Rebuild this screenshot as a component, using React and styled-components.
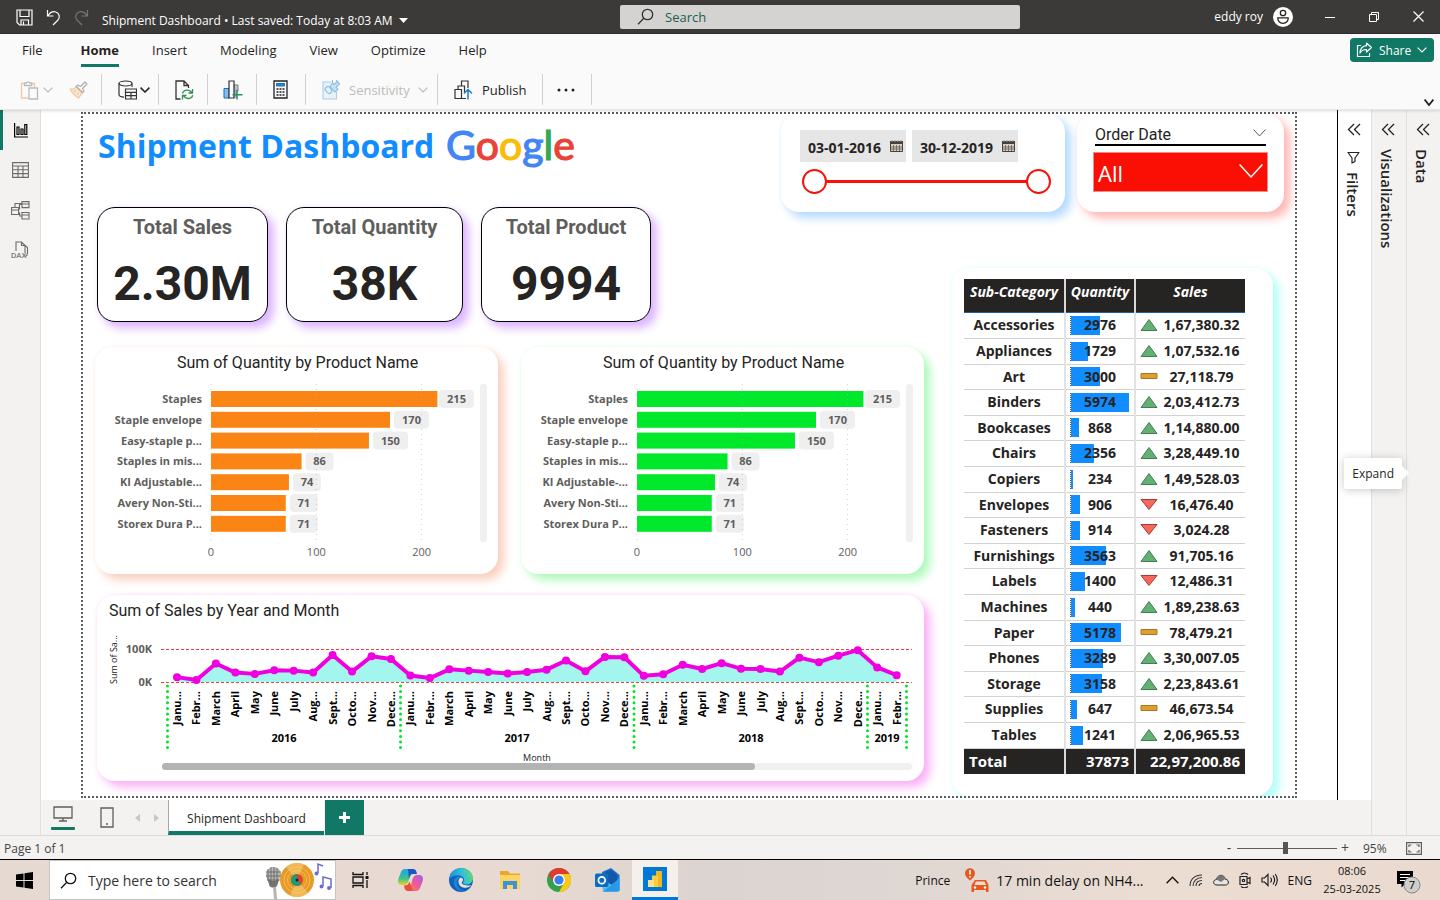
import React, { useState } from 'react';
import styled, { createGlobalStyle, css } from 'styled-components';

const ui = '"Open Sans", "Noto Sans", sans-serif';
const din = 'Roboto, "Liberation Sans", sans-serif';
const green = '#117865';
const grey = '#605e5c';
const ink = '#252423';

const GlobalStyle = createGlobalStyle`
  * { box-sizing: border-box; }
  body { margin: 0; font-family: ${ui}; font-size: 12px; color: ${ink}; background: #f3f2f1; }
  button, input, select { font: inherit; color: inherit; }
  button { border: 0; padding: 0; background: none; cursor: pointer; }
  h1, h2, h3, p { margin: 0; font-weight: inherit; }
  svg { display: block; flex: none; }
`;

/* ---------- shell ---------- */
const Shell = styled.div`
  min-height: 100vh;
  display: flex;
  flex-direction: column;
  overflow: hidden;
`;

const TitleBar = styled.header`
  height: 34px;
  display: grid;
  grid-template-columns: 31fr 20fr 21fr;
  align-items: center;
  background: #3b3a39;
  border-bottom: 1px solid #2f2d33;
  color: #fff;
`;
const TitleLeft = styled.div`
  display: flex;
  align-items: center;
  padding: 2px 0 0 16px;
  gap: 13px;
  white-space: nowrap;
`;
const TitleText = styled.h1`
  display: flex;
  align-items: center;
  gap: 6px;
  font-size: 12px;
  line-height: 16px;
  padding-top: 6px;
`;
const TitleRight = styled.div`
  display: flex;
  align-items: center;
  justify-content: flex-end;
`;
const UserName = styled.span`
  margin-right: 10px;
`;
const WindowButton = styled.button`
  width: 44px;
  height: 32px;
  display: flex;
  align-items: center;
  justify-content: center;
`;
const SearchBox = styled.label`
  height: 24px;
  display: flex;
  align-items: center;
  gap: 11px;
  padding-left: 17px;
  border-radius: 2px;
  background: #d4d3d1;
`;
const SearchInput = styled.input`
  flex: 1;
  min-width: 0;
  border: 0;
  padding: 0;
  outline: 0;
  background: none;
  font-size: 13px;
  &::placeholder { color: #1b5e50; opacity: 1; }
`;

const Ribbon = styled.div`
  background: #fafafa;
  border-bottom: 1px solid #e6e6e6;
  box-shadow: 0 1px 3px rgba(0, 0, 0, 0.14);
  z-index: 2;
`;
const RibbonTabs = styled.nav`
  height: 36px;
  display: flex;
  align-items: center;
  padding: 0 6px 0 22px;
  gap: 33px;
`;
const RibbonTab = styled.button`
  height: 30px;
  padding: 0 0 1px;
  border-bottom: 3px solid ${(p) => (p.$active ? green : 'transparent')};
  font-size: 13px;
  line-height: 20px;
  font-weight: ${(p) => (p.$active ? 700 : 400)};
  margin-right: ${(p) => (p.$first ? '5px' : '0')};
`;
const ShareButton = styled.button`
  display: flex;
  align-items: center;
  gap: 6px;
  height: 24px;
  width: 84px;
  margin: 0 0 4px auto;
  padding-left: 6px;
  border-radius: 4px;
  background: ${green};
  color: #fff;
  font-size: 12px;
`;
const Toolbar = styled.div`
  height: 39px;
  display: flex;
  align-items: center;
`;
const ToolGroup = styled.div`
  width: ${(p) => p.$w}px;
  height: 31px;
  padding-left: ${(p) => p.$pad || 0}px;
  display: flex;
  align-items: center;
  gap: ${(p) => p.$gap || 0}px;
  border-right: 1px solid #d2d0ce;
`;
const ToolButton = styled.button`
  display: flex;
  align-items: center;
  gap: ${(p) => p.$gap || 4}px;
  font-size: 13px;
  color: ${(p) => (p.disabled ? '#bdbbb9' : ink)};
`;
const CollapseButton = styled.button`
  margin: auto 6px 3px auto;
`;

const Body = styled.div`
  flex: 1;
  display: flex;
`;
const Rail = styled.nav`
  width: 41px;
  background: #f3f2f1;
  border-right: 1px solid #e1dfdd;
  display: flex;
  flex-direction: column;
`;
const RailButton = styled.button`
  height: 40px;
  padding-right: 2px;
  display: flex;
  align-items: center;
  justify-content: center;
  border-left: 3px solid ${(p) => (p.$active ? green : 'transparent')};
`;
const Center = styled.main`
  flex: 1;
  min-width: 0;
  display: flex;
  flex-direction: column;
`;
const Workspace = styled.div`
  flex: 1;
  display: flex;
  background: #fff;
`;
const Report = styled.section`
  flex: 1;
  min-width: 0;
  margin: 2px 40px;
  border: 2px dotted #5c5c5c;
  padding: 0 11px 0 12px;
  display: grid;
  grid-template-columns: minmax(0, 1fr) 171px 332px;
  grid-template-rows: 154px 79px 1fr;
  overflow: hidden;
`;

/* ---------- side panes ---------- */
const Pane = styled.aside`
  width: ${(p) => p.$w}px;
  display: flex;
  flex-direction: column;
  align-items: center;
  padding: 11px 2px 0 0;
  background: ${(p) => (p.$white ? '#fff' : '#f3f2f1')};
  border-left: 1px solid ${(p) => (p.$white ? '#000' : '#e1dfdd')};
`;
const PaneTitle = styled.h2`
  writing-mode: vertical-rl;
  font-size: 15px;
  line-height: 20px;
  font-weight: 600;
  margin: ${(p) => (p.$tight ? 8 : 12)}px 2px 0 0;
`;
const PaneButton = styled.button`
  height: 16px;
  margin-bottom: ${(p) => (p.$below || 0)}px;
`;
const PaneTooltip = styled.div`
  position: absolute;
  right: 38px;
  top: 458px;
  z-index: 5;
  padding: 0 8px;
  line-height: 31px;
  font-size: 12px;
  background: #fff;
  border-radius: 2px;
  box-shadow: 0 1px 8px rgba(0, 0, 0, 0.22);
  &::after {
    content: '';
    position: absolute;
    right: -5px;
    top: 10px;
    width: 10px;
    height: 10px;
    background: #fff;
    transform: rotate(45deg);
  }
`;

/* ---------- report visuals ---------- */
const Card = styled.article`
  background: #fff;
  border-radius: ${(p) => p.$r || 18}px;
  box-shadow: 6px 6px 10px ${(p) => p.$glow}, 0 0 4px ${(p) => p.$glow}55;
`;
const Intro = styled.div`
  grid-column: 1;
  grid-row: 1 / 3;
  padding-left: 2px;
`;
const Heading = styled.div`
  height: 93px;
  display: flex;
  align-items: flex-start;
  gap: 12px;
  padding-left: 1px;
  white-space: nowrap;
`;
const ReportTitle = styled.h2`
  font-size: 32px;
  line-height: 64px;
  font-weight: 700;
  color: #118dff;
`;
const KpiRow = styled.div`
  display: flex;
  gap: 18px;
`;
const Kpi = styled(Card)`
  width: ${(p) => p.$w}px;
  height: 115px;
  border: 1px solid #000;
  font-family: ${din};
  text-align: center;
  font-weight: 700;
`;
const KpiLabel = styled.h3`
  font-size: 20px;
  line-height: 38px;
  color: ${grey};
`;
const KpiValue = styled.p`
  font-size: 48px;
  line-height: 76px;
`;
const Filters = styled.div`
  grid-column: 2 / 4;
  grid-row: 1;
  height: 98px;
  display: flex;
  gap: 12px;
`;
const DateCard = styled(Card)`
  flex: 1;
  padding: 16px 14px 0 19px;
`;
const DateFields = styled.div`
  display: flex;
  gap: 6px;
`;
const DateField = styled.label`
  width: 106px;
  height: 32px;
  display: flex;
  align-items: center;
  padding: 2px 0 0 8px;
  background: #e6e6e6;
  & > svg { margin-bottom: 3px; }
`;
const DateInput = styled.input`
  width: 82px;
  padding: 0;
  border: 0;
  background: none;
  font-size: 14px;
  font-weight: 700;
`;
const Range = styled.div`
  display: grid;
  align-items: center;
  margin: 7px 0 0 2px;
  height: 25px;
  &::before {
    content: '';
    grid-area: 1 / 1;
    height: 3px;
    margin: 0 12px;
    background: #fb1108;
  }
`;
const thumb = css`
  appearance: none;
  width: 25px;
  height: 25px;
  border: 2px solid #f3130c;
  border-radius: 50%;
  background: #fff;
  pointer-events: auto;
`;
const RangeInput = styled.input`
  grid-area: 1 / 1;
  appearance: none;
  width: 100%;
  height: 25px;
  margin: 0;
  background: none;
  pointer-events: none;
  &::-webkit-slider-thumb { ${thumb} }
`;
const OrderCard = styled(Card)`
  width: 207px;
  padding: 12px 16px 0;
`;
const OrderLabel = styled.label`
  display: flex;
  align-items: center;
  justify-content: space-between;
  margin: 0 2px 6px;
  border-bottom: 2px solid #000;
  font-family: ${din};
  font-size: 16px;
  line-height: 18px;
  & > svg { margin-bottom: 4px; }
`;
const SelectWrap = styled.div`
  display: grid;
  align-items: center;
  & > * { grid-area: 1 / 1; }
  & > svg { justify-self: end; margin: 0 5px 3px 0; pointer-events: none; }
`;
const OrderSelect = styled.select`
  appearance: none;
  width: 100%;
  height: 40px;
  padding: 2px 4px 0;
  border: 1px solid #f98a85;
  border-radius: 0;
  background: #fb0f05;
  color: #fff;
  font-size: 22px;
`;
const Charts = styled.div`
  grid-column: 1 / 3;
  grid-row: 3;
  margin-right: 28px;
  display: flex;
  flex-direction: column;
  gap: 21px;
`;
const ChartPair = styled.div`
  display: grid;
  grid-template-columns: 1fr 1fr;
  gap: 23px;
`;
const BarCard = styled(Card)`
  height: 227px;
`;
const ChartTitle = styled.h3`
  font-family: ${din};
  font-size: 16px;
  line-height: 32px;
  text-align: ${(p) => (p.$left ? 'left' : 'center')};
  padding-left: ${(p) => (p.$left ? 12 : 2)}px;
`;
const ChartSvg = styled.svg`
  width: 100%;
  height: auto;
  font-family: ${ui};
`;
const LineCard = styled(Card)`
  height: 186px;
  margin-left: 2px;
`;
const TableCard = styled(Card)`
  grid-column: 3;
  grid-row: 2 / 4;
  margin-right: 11px;
  padding: 11px 12px 0;
`;
const DataTable = styled.table`
  width: 281px;
  border-collapse: collapse;
  table-layout: fixed;
  font-size: 14px;
  line-height: 18px;
  font-weight: 700;
  text-align: center;
`;
const HeadCell = styled.th`
  height: 33px;
  width: ${(p) => p.$w}px;
  padding: 4px 0 0;
  vertical-align: top;
  background: ${ink};
  color: #fff;
  font-size: 14px;
  font-style: italic;
  border-bottom: 1px solid #1c5fa8;
  & + & { border-left: 2px solid #d8d8d8; }
`;
const BodyRow = styled.tr`
  height: 26px;
  &:nth-child(5n), &:nth-child(5n + 3) { height: 25px; }
`;
const Cell = styled.td`
  padding: 0;
  border-bottom: 1px solid #d2d2d2;
  & + & { border-left: 2px solid #e2e2e2; }
`;
const BarCell = styled.div`
  display: grid;
  align-items: center;
  margin-left: 4px;
  border-left: 1px dotted #555;
  & > * { grid-area: 1 / 1; }
`;
const DataBar = styled.i`
  height: 19px;
  background: #118dff;
`;
const BarText = styled.span`
  padding-right: 5px;
`;
const SalesCell = styled.div`
  display: flex;
  align-items: center;
  padding-left: 4px;
`;
const SalesText = styled.span`
  flex: 1;
`;
const FootCell = styled.td`
  height: 26px;
  padding: 0 5px;
  background: ${ink};
  color: #fff;
  font-size: 15px;
  text-align: ${(p) => (p.$left ? 'left' : 'right')};
  & + & { border-left: 2px solid #d8d8d8; padding-left: 0; }
`;

/* ---------- bottom bars ---------- */
const PageTabs = styled.div`
  height: 35px;
  display: flex;
  background: #f3f2f1;
`;
const ViewButton = styled.button`
  width: ${(p) => p.$w}px;
  display: flex;
  flex-direction: column;
  align-items: center;
  justify-content: center;
  gap: 5px;
`;
const ViewMark = styled.i`
  width: 24px;
  height: 3px;
  border-radius: 1px;
  background: ${green};
`;
const PageTab = styled.button`
  width: 156px;
  padding-top: 6px;
  background: #fff;
  border-left: 1px solid #a8a8a8;
  border-bottom: 4px solid ${green};
  font-size: 12px;
`;
const AddPage = styled.button`
  width: 39px;
  margin-left: 1px;
  display: flex;
  align-items: center;
  justify-content: center;
  background: ${green};
`;
const StatusBar = styled.footer`
  height: 25px;
  display: flex;
  align-items: center;
  padding: 1px 18px 0 4px;
  border-top: 1px solid #dddbd9;
  border-bottom: 1px solid #000;
  background: #f3f2f1;
  color: #444;
  font-size: 12px;
`;
const ZoomGroup = styled.div`
  margin-left: auto;
  display: flex;
  align-items: center;
  gap: 4px;
`;
const ZoomButton = styled.button`
  line-height: 16px;
  width: 8px;
  font-size: 14px;
`;
const ZoomSlider = styled.input`
  appearance: none;
  width: 100px;
  height: 12px;
  margin: 0;
  background: linear-gradient(${grey}, ${grey}) center / 100% 1px no-repeat;
  &::-webkit-slider-thumb {
    appearance: none;
    width: 5px;
    height: 12px;
    background: #555;
  }
`;
const ZoomValue = styled.span`
  width: 26px;
  margin: 0 8px 0 10px;
`;
const FitButton = styled.button`
  margin-left: 5px;
`;

const Taskbar = styled.footer`
  height: 40px;
  display: flex;
  align-items: center;
  background: linear-gradient(90deg, #e6d9d2 0%, #e8dad2 36%, #dcd4d0 49%, #ddd6d2 60%, #ecddd3 80%, #ead9cf 100%);
`;
const StartButton = styled.button`
  width: 49px;
  height: 40px;
  display: flex;
  align-items: center;
  justify-content: center;
`;
const TaskSearch = styled.label`
  width: 287px;
  height: 40px;
  display: flex;
  align-items: center;
  padding: 0 3px 0 10px;
  gap: 11px;
  background: #fff;
  border: 1px solid #c8c4c2;
`;
const TaskInput = styled.input`
  flex: 1;
  min-width: 0;
  border: 0;
  padding: 0;
  outline: 0;
  background: none;
  font-size: 14px;
  &::placeholder { color: #333; opacity: 1; }
`;
const TaskApp = styled.button`
  width: ${(p) => p.$w || 49}px;
  height: 40px;
  display: flex;
  align-items: center;
  justify-content: center;
  ${(p) => p.$active && css`
    background: #f6f0ec;
    border-bottom: 3px solid #0078d7;
  `}
`;
const Tray = styled.div`
  margin-left: auto;
  display: flex;
  align-items: center;
  padding-right: 18px;
  color: #111;
  white-space: nowrap;
`;
const Traffic = styled.button`
  display: flex;
  align-items: center;
  gap: 6px;
  margin: 0 22px 0 14px;
  font-size: 14px;
`;
const TrayIcons = styled.div`
  display: flex;
  align-items: center;
  gap: 10px;
`;
const Clock = styled.time`
  width: 68px;
  margin: 0 10px 0 6px;
  text-align: center;
  font-size: 11px;
  line-height: 18px;
`;

/* ---------- icons ---------- */
const Svg = ({ w, h, vw, vh, children, ...rest }) => (
  <svg width={w} height={h} viewBox={`0 0 ${vw || w} ${vh || h}`} fill="none" aria-hidden="true" {...rest}>{children}</svg>
);
const Chevron = ({ w = 10, h = 6, color = '#444', sw = 1.2 }) => (
  <Svg w={w} h={h} stroke={color} strokeWidth={sw}><path d={`M.6 .6 L${w / 2} ${h - 1} L${w - 0.6} .6`} /></Svg>
);
const SaveIcon = () => (
  <Svg w={17} h={17} stroke="#fff" strokeWidth="1.2"><path d="M1 1h15v15H3.5L1 13.5zM4 1v6.5h9V1M5 16v-5h7.500v5M7.500 12.500V16" /></Svg>
);
const UndoIcon = ({ flip, color }) => (
  <Svg w={15} h={17} stroke={color} strokeWidth="1.200">
    <g transform={flip ? 'translate(15 0) scale(-1 1)' : undefined}><path d="M1.500 1v6h6M1.800 6.800C4 3.500 7 2 9.800 3c3.800 1.300 4.600 5.500 2 8.300L7 16" /></g>
  </Svg>
);
const SearchIcon = ({ color = '#333', s = 17 }) => (
  <Svg w={s} h={s} vw={17} vh={17} stroke={color} strokeWidth="1.300"><circle cx="10.500" cy="6.500" r="5.200" /><path d="M6.800 10.300 1 16.200" /></Svg>
);
const Avatar = () => (
  <Svg w={20} h={20}><circle cx="10" cy="10" r="10" fill="#fff" /><circle cx="10" cy="6" r="2.700" stroke="#222" strokeWidth="1.300" /><path d="M4.800 10.800h10.400c.3 3.300-2 5.500-5.200 5.500s-5.500-2.200-5.200-5.500z" stroke="#222" strokeWidth="1.300" /></Svg>
);
const ShareIcon = () => (
  <Svg w={17} h={16} stroke="#fff" strokeWidth="1.200"><path d="M5 3.500H1.500v11h12V11M10.500 1l5 4.500-5 4.500V7.500C7.500 7.300 5.500 8.500 4 11c.3-4 2.500-7 6.500-7.300z" strokeLinejoin="round" /></Svg>
);
const PasteIcon = () => (
  <Svg w={19} h={20} strokeWidth="1.300"><path d="M8 18H1.500V3.500h3M11.500 3.500h3V7" stroke="#efc9a4" /><path d="M4.500 5.500V3h2a1.700 1.700 0 0 1 3.200 0h2v2.500z" stroke="#bdbbb9" /><path d="M9 8h8.500v11H9z" stroke="#bdbbb9" fill="#fafafa" /></Svg>
);
const BrushIcon = () => (
  <Svg w={19} h={18} strokeWidth="1.200" strokeLinejoin="round"><path d="M1 8c3 .5 5-.5 6.500-2.500l6 6C12 14 11 15.500 9.500 17 6 15 3 12 1 8z" fill="#fbe3cc" stroke="#efc9a4" /><path d="M7 5.500l2-1.500 2.500 1.500L16 1l2 2-4.500 4.500L15 10l-1.500 1.700z" stroke="#b0aeac" /><path d="M5 11l2-2M8 14l2-2.500" stroke="#efc9a4" /></Svg>
);
const DataIcon = () => (
  <Svg w={19} h={20} stroke="#333" strokeWidth="1.200"><ellipse cx="7.500" cy="3.500" rx="6.500" ry="2.500" /><path d="M1 3.500v11c0 1.500 2 2.500 5 2.700M14 3.500V7M7.500 9h11v10h-11zM7.500 12.300h11M7.500 15.600h11M13 12.300V19" /></Svg>
);
const RefreshDocIcon = () => (
  <Svg w={19} h={20} strokeWidth="1.300"><path d="M5.500 19H1V1h8l4.500 4.500V8M9 1v4.500h4.500" stroke="#333" /><path d="M7.500 13.500c.6-2.300 2.300-3.400 4.700-3.400 2 0 3.700 1 4.600 2.700M17.500 9v4h-4M17.800 15.200c-.8 2.300-2.400 3.300-4.700 3.300-2 0-3.700-1-4.600-2.700M7.500 19.500v-4h4" stroke="#2f9150" /></Svg>
);
const NewVisualIcon = () => (
  <Svg w={20} h={20}><path d="M1 8.500h5V18H1z" fill="#83bdf0" stroke="#1a6fb5" /><path d="M11 5h4v6h-4z" fill="#c8c6c4" stroke="#777" /><path d="M11 9h3v9h-3z" fill="#83bdf0" /><path d="M6 18V1h5v17z" fill="#fafafa" stroke="#333" strokeWidth="1.200" /><path d="M14 10v9.500M9.500 14.800h10" stroke="#2f9150" strokeWidth="1.500" /></Svg>
);
const CalcIcon = () => (
  <Svg w={15} h={19}><path d="M1 1h13v17H1z" stroke="#222" strokeWidth="1.300" /><path d="M3.500 3.500h8v2.500h-8z" fill="#2a8ad4" stroke="#1a6fb5" /><path d="M3.500 9h2M6.500 9h2M9.500 9h2M3.500 12h2M6.500 12h2M9.500 12h2M3.500 15h2M6.500 15h2M9.500 15h2" stroke="#222" strokeWidth="1.700" /></Svg>
);
const SensitivityIcon = () => (
  <Svg w={19} h={21} strokeWidth="1.100"><path d="M9 3H1v17h13.500v-7" stroke="#a9cfe8" fill="#e6f3fb" /><rect x="-2.500" y="-3.500" width="5" height="7" rx="2" transform="translate(6.500 11) rotate(-40)" stroke="#8cbcdb" /><path d="M8 7.500l5 5.500 3-2.500-2-2.500 3.500-3-2-2.500L12 5.500l-1.500-1.500z" stroke="#8cbcdb" fill="#c5e2f3" /><path d="M10.500 4V1M14 3l1-2" stroke="#8cbcdb" /></Svg>
);
const PublishIcon = () => (
  <Svg w={19} h={20} strokeWidth="1.200"><path d="M12 18.500H1V9.500h6.500v9M4 9.500V6h6.500v6M7.500 6V1H14v7" stroke="#333" /><path d="M14 19.500V9.500M10 13.500l4-4 4 4" stroke="#1a7fc4" strokeWidth="1.500" /></Svg>
);
const ReportIcon = () => (
  <Svg w={14} h={15} stroke="#000" strokeWidth="1.200"><path d="M.6 0v14H14M3 4h2v7.500H3zM7 6h2v5.500H7zM10.800 1.500h2v10h-2z" /></Svg>
);
const GridIcon = () => (
  <Svg w={17} h={16} stroke="#6d6b69" strokeWidth="1.100"><path d="M.6.6h15.800v14.800H.6zM.6 4h15.800M.6 7.800h15.800M.6 11.600h15.800M6 4v11.400M11 4v11.400" /></Svg>
);
const ModelIcon = () => (
  <Svg w={19} h={19} stroke="#6d6b69" strokeWidth="1.100"><path d="M.6 6.500h7v7h-7zM.6 9h7M11 .6h7v6h-7zM11 3h7M11 11.500h7v6.500h-7zM11 14h7M7.500 8h1V3.500H11M7.500 12h1.200v3H11M4 6.500V2.500h7" /></Svg>
);
const DaxIcon = () => (
  <Svg w={19} h={18} stroke="#6d6b69" strokeWidth="1.100"><path d="M5 10V1h5.500L14 4.500V12M10.500 1v3.500H14M13 3.500l3.500 3V13" /><text x="0" y="17" fontSize="8" fontFamily="Roboto" fill="#555" stroke="none">DAX</text><path d="M14.500 15.500l2-2" /></Svg>
);
const DoubleLeft = () => (
  <Svg w={14} h={13} stroke="#222" strokeWidth="1.300"><path d="M7 1 1.500 6.500 7 12M13 1 7.500 6.500 13 12" /></Svg>
);
const FunnelIcon = () => (
  <Svg w={13} h={13} stroke="#222" strokeWidth="1.200"><path d="M1 1.500h11L8 7v3.500L5 12V7z" strokeLinejoin="round" /></Svg>
);
const CalendarIcon = () => (
  <Svg w={13} h={12}><path d="M.5 1.500h12v10H.5z" fill="#d8cfc4" stroke="#4a3f38" /><path d="M0 1h13v3H0z" fill="#4a4038" /><path d="M2 0v2M5 0v2M8 0v2M11 0v2" stroke="#999" /><path d="M3.500 5v6M6.500 5v6M9.500 5v6M1 7h11M1 9h11" stroke="#6a5c52" strokeWidth=".8" /></Svg>
);

const StatusGlyph = ({ kind }) => (
  <Svg w={18} h={14}>
    {kind === 'up' && <path d="M1 12.500 9 1.500l8 11z" fill="#63b075" stroke="#3f7f50" />}
    {kind === 'down' && <path d="M1 1.500h16l-8 10z" fill="#f4695c" stroke="#a83a30" />}
    {kind === 'flat' && <path d="M1 3.500h16v5H1z" fill="#e0a030" stroke="#a87820" />}
  </Svg>
);

/* ---------- data ---------- */
const products = (adj) => [
  ['Staples', 215], ['Staple envelope', 170], ['Easy-staple p...', 150], ['Staples in mis...', 86],
  [adj, 74], ['Avery Non-Sti...', 71], ['Storex Dura P...', 71],
];
const tableRows = [
  ['Accessories', 2976, 'up', '1,67,380.32'], ['Appliances', 1729, 'up', '1,07,532.16'],
  ['Art', 3000, 'flat', '27,118.79'], ['Binders', 5974, 'up', '2,03,412.73'],
  ['Bookcases', 868, 'up', '1,14,880.00'], ['Chairs', 2356, 'up', '3,28,449.10'],
  ['Copiers', 234, 'up', '1,49,528.03'], ['Envelopes', 906, 'down', '16,476.40'],
  ['Fasteners', 914, 'down', '3,024.28'], ['Furnishings', 3563, 'up', '91,705.16'],
  ['Labels', 1400, 'down', '12,486.31'], ['Machines', 440, 'up', '1,89,238.63'],
  ['Paper', 5178, 'flat', '78,479.21'], ['Phones', 3289, 'up', '3,30,007.05'],
  ['Storage', 3158, 'up', '2,23,843.61'], ['Supplies', 647, 'flat', '46,673.54'],
  ['Tables', 1241, 'up', '2,06,965.53'],
];
const months = ['Janu...', 'Febr...', 'March', 'April', 'May', 'June', 'July', 'Aug...', 'Sept...', 'Octo...', 'Nov...', 'Dece...'];
const sales = [
  15, 6, 57, 29, 25, 36, 35, 29, 83, 32, 79, 71,
  20, 12, 39, 35, 31, 26, 31, 38, 66, 33, 77, 76,
  19, 24, 53, 40, 58, 41, 40, 32, 75, 61, 81, 98, 45, 21,
];

function BarChart({ rows, color }) {
  const x0 = 116;
  const k = 1.053;
  return (
    <ChartSvg viewBox="0 0 403 186" role="img" aria-label="Quantity by product">
      {[0, 100, 200].map((t) => (
        <text key={t} x={x0 + t * k} y="177" fontSize="11" textAnchor="middle" fill={grey}>{t}</text>
      ))}
      {rows.map(([name, v], i) => {
        const cy = 20 + i * 20.8;
        const bx = Math.min(x0 + v * k + 4, 344);
        const bw = v > 99 ? 35 : 28;
        return (
          <g key={name} fontSize="11" fontWeight="700" fill={grey}>
            <text x="107" y={cy + 4} textAnchor="end">{name}</text>
            <rect x={x0} y={cy - 8} width={v * k} height="16" fill={color} />
            <rect x={bx} y={cy - 9} width={bw} height="18" rx="4" fill="#efefef" />
            <text x={bx + bw / 2} y={cy + 4} textAnchor="middle">{v}</text>
          </g>
        );
      })}
      {[0, 100, 200].map((t) => (
        <line key={t} x1={x0 + t * k} x2={x0 + t * k} y1="5" y2="164" stroke="#b0b0b0" strokeOpacity=".6" strokeDasharray="1 4" />
      ))}
      <rect x="385" y="5" width="7" height="158" rx="3" fill="#f0f0f0" />
    </ChartSvg>
  );
}

function LineChart() {
  const px = (i) => 80 + i * 19.45;
  const py = (v) => 55 - v * 0.325;
  const pts = sales.map((v, i) => `${px(i)},${py(v)}`).join(' ');
  const splits = [70.5, 303.5, 537, 770.5, 809.5];
  return (
    <ChartSvg viewBox="0 0 827 154" role="img" aria-label="Sales by month">
      <polygon points={`${px(0)},55 ${pts} ${px(37)},55`} fill="#a3f5ee" />
      <path d="M64 22.500h751M64 55.500h751" stroke="#f0403c" strokeDasharray="3 2" />
      <polyline points={pts} fill="none" stroke="#f000e0" strokeWidth="4" strokeLinejoin="round" />
      {sales.map((v, i) => <circle key={i} cx={px(i)} cy={py(v)} r="4" fill="#f000e0" />)}
      <g fontSize="11" fontWeight="700" fill={grey} textAnchor="end">
        <text x="55" y="26">100K</text>
        <text x="55" y="59">0K</text>
      </g>
      <text transform="translate(20 57) rotate(-90)" fontSize="9" fill="#222">Sum of Sa...</text>
      {splits.map((x) => (
        <line key={x} x1={x} x2={x} y1="59" y2="121" stroke="#00e52a" strokeWidth="3" strokeLinecap="round" strokeDasharray="0 5.600" />
      ))}
      <g fontSize="11" fontWeight="700" fill="#000">
        {sales.map((v, i) => (
          <text key={i} transform={`translate(${px(i) + 4} 64) rotate(-90)`} textAnchor="end">{months[i % 12]}</text>
        ))}
        {[['2016', 187], ['2017', 420], ['2018', 654], ['2019', 790]].map(([y, x]) => (
          <text key={y} x={x} y="115" textAnchor="middle">{y}</text>
        ))}
      </g>
      <text x="440" y="134" fontSize="9" textAnchor="middle" fill="#222">Month</text>
      <rect x="65" y="136" width="750" height="7" rx="3.500" fill="#f0f0f0" />
      <rect x="65" y="136" width="593" height="7" rx="3.500" fill="#b3b3b3" />
    </ChartSvg>
  );
}

const GoogleLogo = () => (
  <Svg w={140} h={60}>
    <text x="0" y="46" fontFamily="Lato" fontSize="41" strokeWidth="1.200">
      <tspan fill="#4285f4" stroke="#4285f4">G</tspan><tspan fill="#ea4335" stroke="#ea4335">o</tspan><tspan fill="#fbbc05" stroke="#fbbc05">o</tspan><tspan fill="#4285f4" stroke="#4285f4">g</tspan><tspan fill="#34a853" stroke="#34a853">l</tspan><tspan fill="#ea4335" stroke="#ea4335">e</tspan>
    </text>
  </Svg>
);

/* ---------- taskbar art ---------- */
const WindowsIcon = () => (
  <Svg w={17} h={17} fill="#000"><path d="M0 2.500 7.500 1.400V8H0zM8.500 1.200 17 0v8H8.500zM0 9h7.500v6.600L0 14.500zM8.500 9H17v8l-8.500-1.200z" /></Svg>
);
const MusicArt = () => (
  <Svg w={68} h={38}>
    <circle cx="33" cy="19" r="17" fill="#e89a28" />
    <circle cx="33" cy="19" r="13" stroke="#f6c45c" strokeWidth=".8" />
    <circle cx="33" cy="19" r="9.500" stroke="#f6c45c" strokeWidth=".8" />
    <path d="M22 6 33 19 40 3.500A17 17 0 0 0 22 6zM44 32 33 19 26 34.500A17 17 0 0 0 44 32z" fill="#f9d27a" fillOpacity=".55" />
    <circle cx="33" cy="19" r="6" fill="#d8452f" /><path d="M27 19a6 6 0 0 1 6-6v6l4 4.500A6 6 0 0 1 27 19z" fill="#1d9c7a" /><circle cx="33" cy="19" r="1.500" fill="#222" />
    <path d="M2 14 17 12 13 25c-2 2.500-6 2-7.500 0z" fill="#777775" /><ellipse cx="9.500" cy="13" rx="7.500" ry="7" fill="#b5b5b2" />
    <path d="M4 8v12M7 6v18M10 6v18M13 7v16M2 11h15M2 15h15M4 19h12" stroke="#62625f" strokeWidth=".8" /><path d="M9 26h3l1 12h-3z" fill="#b5b5b2" />
    <path d="M54 12V3l5 2M59 25V16l8 2v9" stroke="#6d6bd0" strokeWidth="1.500" /><circle cx="52.500" cy="12.500" r="2" fill="#6d6bd0" /><circle cx="57.500" cy="25.500" r="2" fill="#6d6bd0" /><circle cx="65" cy="27" r="2" fill="#6d6bd0" />
  </Svg>
);
const TaskViewIcon = () => (
  <Svg w={17} h={16} stroke="#111" strokeWidth="1.300"><path d="M1 0v2.500h10V0M1 16v-2.500h10V16M1 5h10v6H1zM15 0v3M15 8v8" /><path d="M13.500 4h3v3h-3z" fill="#111" stroke="none" /></Svg>
);
const CopilotIcon = () => (
  <Svg w={25} h={24}>
    <defs>
      <linearGradient id="cpA" x1="0" y1="0" x2="0" y2="1"><stop stopColor="#1fa2f0" /><stop offset=".6" stopColor="#3bc48a" /><stop offset="1" stopColor="#f2d01e" /></linearGradient>
      <linearGradient id="cpB" x1="1" y1="0" x2="0" y2="1"><stop stopColor="#a35cf0" /><stop offset=".5" stopColor="#ee5a9a" /><stop offset="1" stopColor="#fb8a3c" /></linearGradient>
    </defs>
    <path d="M7 1h9c-3 2-4 6-5 10-1 3.500-2 6-5 6H4c-4 0-4.500-3-3.500-6.500L3 4c.8-2 2-3 4-3z" fill="url(#cpA)" />
    <path d="M10 1h5c2 0 3 1 3.500 3L19 6h-4c-2.500 0-3 2-4 5" fill="#1b55c8" />
    <path d="M18 23H9c3-2 4-6 5-10 1-3.500 2-6 5-6h2c4 0 4.500 3 3.500 6.500L22 20c-.8 2-2 3-4 3z" fill="url(#cpB)" />
    <path d="M15 23h-5c-2 0-3-1-3.500-3L6 17.500c3 0 4.500-1 5.500-4z" fill="#e8503c" />
  </Svg>
);
const EdgeIcon = () => (
  <Svg w={24} h={24}>
    <defs>
      <linearGradient id="edA" x1="0" y1=".5" x2="1" y2=".3"><stop stopColor="#1b8fe0" /><stop offset=".6" stopColor="#36c1d8" /><stop offset="1" stopColor="#66dc5a" /></linearGradient>
    </defs>
    <circle cx="12" cy="12" r="12" fill="#0f62b8" />
    <path d="M0 12C.5 5 5.500 0 12 0s12 5 12 10c0 4-3 6.500-6.500 6.500-2 0-3.500-.8-3.500-1.800 0-.7 1-1.300 1-3 0-2.300-2.500-4.200-6-4.200-4.500 0-8 2-9 4.500z" fill="url(#edA)" />
    <path d="M9 8.500C4.500 9 3 16 7 20c2 2.300 5 3.500 8 3-4-1-7.500-4.500-7-9 .2-2.500 2-4 3.500-5z" fill="#1c83d8" />
    <path d="M11.500 9.500C8 12 9 18 14 19.500c3.500 1 7-.5 8.500-2.500-3 1-7 .5-9-1-1.300-1-.6-2 .3-3 .8-1.500.2-3-2.300-3.500z" fill="#ecdfd8" />
  </Svg>
);
const FolderIcon = () => (
  <Svg w={22} h={20}><path d="M1 1h8l2 2.500h10V19H1z" fill="#e8a92a" /><path d="M1 5h20v14H1z" fill="#fcd462" /><path d="M4 11h14v8h-4v-4H8v4H4z" fill="#3e92dc" /></Svg>
);
const ChromeIcon = () => (
  <Svg w={24} h={24}><circle cx="12" cy="12" r="12" fill="#34a04c" /><path d="M1.600 6A12 12 0 0 1 22.400 6L12 6.500 7 15z" fill="#e23b2e" /><path d="M22.400 6A12 12 0 0 1 12 24l5-9 .5-5.500L12 6z" fill="#fbc816" /><circle cx="12" cy="12" r="6" fill="#fff" /><circle cx="12" cy="12" r="4.600" fill="#3c7df0" /></Svg>
);
const OutlookIcon = () => (
  <Svg w={25} h={24}><path d="M7 4 16 0l8.500 7v15L22 23.500H8z" fill="#1a6fc8" /><path d="M10 4 16 2l6 5v9H10z" fill="#1458a8" /><path d="M8 11l8.500 6 8-6.500V22c0 1-.8 1.600-1.800 1.600H8z" fill="#4cc2f5" /><path d="M8 23.500 24.500 11v11c0 1-.8 1.600-1.800 1.600z" fill="#2a9ae8" /><rect y="5.500" width="13.500" height="13.500" rx="1.500" fill="#0f6cc4" /><circle cx="6.800" cy="12.200" r="3.400" stroke="#fff" strokeWidth="1.700" /></Svg>
);
const PowerBiIcon = () => (
  <Svg w={24} h={24}><path d="M0 0h24v24H0z" fill="#0078d7" /><path d="M13 4h6v16h-6z" fill="#f0b81e" /><path d="M9 8.500h6V20H9z" fill="#f7cd46" /><path d="M5 13h6v7H5z" fill="#fde08a" /></Svg>
);
const TrafficIcon = () => (
  <Svg w={26} h={26}><path d="M11 13h11l2.500 5v7H22v-2H10v2H7.500v-7z" fill="#e8571c" /><path d="M11.800 14.500h8.800l1.400 3.500H10.500z" fill="#ecdcd4" /><circle cx="11" cy="20.500" r="1.200" fill="#fff" /><circle cx="21" cy="20.500" r="1.200" fill="#fff" /><path d="M6 13.500C3 11 1 9 1 6.200a5 5 0 0 1 10 0C11 9 9 11 6 13.500z" fill="#e8571c" /><path d="M6 3v4.500M6 9v1.500" stroke="#fff" strokeWidth="1.600" /></Svg>
);
const WifiIcon = () => (
  <Svg w={14} h={14} stroke="#333" strokeWidth="1.100"><path d="M1 13C1 6 6 2 13 2M4 13c0-5 4-8.500 9-8.500M7 13c0-3.500 2.500-5.500 6-5.500M10 13c0-1.500 1-2.500 3-2.500" /></Svg>
);
const CloudIcon = () => (
  <Svg w={16} h={12}><path d="M4 11C-.5 11-.3 5.800 3.500 5.500 4.500 0 11.500 0 12 5c4.500.3 4.500 6 .5 6z" fill="#e4e4e4" stroke="#222" /><path d="M3.500 5.500C4.500 0 11.500 0 12 5L8 8z" fill="#777" /></Svg>
);
const CameraIcon = () => (
  <Svg w={12} h={16} stroke="#222" strokeWidth="1.200"><path d="M1 4.500h7v8H1zM8 7l3-1.500v6L8 10M2 2.500C4 .5 7 .5 9 2.500M2 14.500c2 1.500 5 1.500 7 0" /><circle cx="4.500" cy="8.500" r="1.200" /></Svg>
);
const SoundIcon = () => (
  <Svg w={17} h={14} stroke="#222" strokeWidth="1.200"><path d="M1 5h2.500L7 1.500v11L3.500 9H1zM9.500 4.500c1.200 1.500 1.200 3.500 0 5M12 2.500c2 2.800 2 6.200 0 9M14.300 1c2.500 3.800 2.500 8.200 0 12" /></Svg>
);
const NotifyIcon = () => (
  <Svg w={26} h={28}><path d="M1 5h16v13H9l-3.500 3.500V18H1z" fill="#000" /><path d="M4 8.500h10M4 11.500h10M4 14.500h6" stroke="#fff" /><circle cx="16" cy="19" r="8" fill="#d0cecd" stroke="#888" /><text x="16" y="23" fontSize="11" fontFamily="Open Sans" textAnchor="middle" fill="#000">7</text></Svg>
);

/* ---------- app ---------- */
export default function App() {
  const [zoom, setZoom] = useState(48);
  const [from, setFrom] = useState(0);
  const [to, setTo] = useState(100);
  return (
    <Shell>
      <GlobalStyle />
      <TitleBar>
        <TitleLeft>
          <button aria-label="Save"><SaveIcon /></button>
          <button aria-label="Undo"><UndoIcon color="#fff" /></button>
          <button aria-label="Redo"><UndoIcon flip color="#777" /></button>
          <TitleText>
            Shipment Dashboard • Last saved: Today at 8:03 AM
            <Svg w={9} h={5} fill="#fff"><path d="M0 0h9L4.500 5z" /></Svg>
          </TitleText>
        </TitleLeft>
        <SearchBox>
          <SearchIcon />
          <SearchInput placeholder="Search" aria-label="Search" />
        </SearchBox>
        <TitleRight>
          <UserName>eddy roy</UserName>
          <Avatar />
          <Svg w={15} h={1} />
          <WindowButton aria-label="Minimize"><Svg w={10} h={10} stroke="#fff"><path d="M0 5.500h10" /></Svg></WindowButton>
          <WindowButton aria-label="Restore"><Svg w={10} h={10} stroke="#fff"><path d="M.5 2.500h7v7h-7zM2.500 2.500v-2h7v7h-2" /></Svg></WindowButton>
          <WindowButton aria-label="Close"><Svg w={11} h={11} stroke="#fff" strokeWidth="1.200"><path d="M.5.5l10 10M10.500.5l-10 10" /></Svg></WindowButton>
        </TitleRight>
      </TitleBar>

      <Ribbon>
        <RibbonTabs>
          {['File', 'Home', 'Insert', 'Modeling', 'View', 'Optimize', 'Help'].map((t, i) => (
            <RibbonTab key={t} $active={i === 1} $first={i === 0}>{t}</RibbonTab>
          ))}
          <ShareButton><ShareIcon /><span>Share</span><Chevron color="#fff" /></ShareButton>
        </RibbonTabs>
        <Toolbar>
          <ToolGroup $w={102} $pad={20} $gap={16}>
            <ToolButton disabled aria-label="Paste"><PasteIcon /><Chevron color="#bdbbb9" /></ToolButton>
            <ToolButton disabled aria-label="Format painter"><BrushIcon /></ToolButton>
          </ToolGroup>
          <ToolGroup $w={57} $pad={16}><ToolButton $gap={3} aria-label="Get data"><DataIcon /><Chevron color="#222" sw={1.5} /></ToolButton></ToolGroup>
          <ToolGroup $w={49} $pad={16}><ToolButton aria-label="Refresh"><RefreshDocIcon /></ToolButton></ToolGroup>
          <ToolGroup $w={49} $pad={15}><ToolButton aria-label="New visual"><NewVisualIcon /></ToolButton></ToolGroup>
          <ToolGroup $w={49} $pad={16}><ToolButton aria-label="New measure"><CalcIcon /></ToolButton></ToolGroup>
          <ToolGroup $w={132} $pad={16}><ToolButton disabled $gap={8}><SensitivityIcon /><span>Sensitivity</span><Chevron color="#bdbbb9" /></ToolButton></ToolGroup>
          <ToolGroup $w={105} $pad={16}><ToolButton $gap={9}><PublishIcon /><span>Publish</span></ToolButton></ToolGroup>
          <ToolGroup $w={49} $pad={14}><ToolButton aria-label="More"><Svg w={18} h={4} fill="#222"><circle cx="2" cy="2" r="1.500" /><circle cx="9" cy="2" r="1.500" /><circle cx="16" cy="2" r="1.500" /></Svg></ToolButton></ToolGroup>
          <CollapseButton aria-label="Collapse ribbon"><Chevron w={10} h={7} color="#222" sw={1.8} /></CollapseButton>
        </Toolbar>
      </Ribbon>

      <Body>
        <Rail>
          <RailButton $active aria-label="Report view"><ReportIcon /></RailButton>
          <RailButton aria-label="Table view"><GridIcon /></RailButton>
          <RailButton aria-label="Model view"><ModelIcon /></RailButton>
          <RailButton aria-label="DAX query view"><DaxIcon /></RailButton>
        </Rail>
        <Center>
          <Workspace>
            <Report>
              <Intro>
                <Heading>
                  <ReportTitle>Shipment Dashboard</ReportTitle>
                  <GoogleLogo />
                </Heading>
                <KpiRow>
                  {[['Total Sales', '2.30M', 171], ['Total Quantity', '38K', 177], ['Total Product', '9994', 170]].map(([l, v, w]) => (
                    <Kpi key={l} $w={w} $glow="#dcb4ff">
                      <KpiLabel>{l}</KpiLabel>
                      <KpiValue>{v}</KpiValue>
                    </Kpi>
                  ))}
                </KpiRow>
              </Intro>
              <Filters>
                <DateCard $glow="#b4daff">
                  <DateFields>
                    {['03-01-2016', '30-12-2019'].map((d, i) => (
                      <DateField key={d}><DateInput defaultValue={d} aria-label={i ? 'End date' : 'Start date'} /><CalendarIcon /></DateField>
                    ))}
                  </DateFields>
                  <Range>
                    <RangeInput type="range" aria-label="Range start" value={from} onChange={(e) => setFrom(e.target.value)} />
                    <RangeInput type="range" aria-label="Range end" value={to} onChange={(e) => setTo(e.target.value)} />
                  </Range>
                </DateCard>
                <OrderCard $glow="#ffb7b3">
                  <OrderLabel htmlFor="order-date">Order Date<Chevron w={13} h={8} color="#556" sw={1} /></OrderLabel>
                  <SelectWrap>
                    <OrderSelect id="order-date"><option>All</option></OrderSelect>
                    <Chevron w={24} h={14} color="#fff" sw={1.5} />
                  </SelectWrap>
                </OrderCard>
              </Filters>
              <Charts>
                <ChartPair>
                  <BarCard $glow="#f9d0bf">
                    <ChartTitle>Sum of Quantity by Product Name</ChartTitle>
                    <BarChart rows={products('KI Adjustable...')} color="#fa8414" />
                  </BarCard>
                  <BarCard $glow="#aef9bb">
                    <ChartTitle>Sum of Quantity by Product Name</ChartTitle>
                    <BarChart rows={products('KI Adjustable-...')} color="#00e82a" />
                  </BarCard>
                </ChartPair>
                <LineCard $glow="#fbb0f6">
                  <ChartTitle $left>Sum of Sales by Year and Month</ChartTitle>
                  <LineChart />
                </LineCard>
              </Charts>
              <TableCard $glow="#b0fff8">
                <DataTable>
                  <thead>
                    <tr><HeadCell $w={101}>Sub-Category</HeadCell><HeadCell $w={70}>Quantity</HeadCell><HeadCell $w={110}>Sales</HeadCell></tr>
                  </thead>
                  <tbody>
                    {tableRows.map(([name, q, kind, amount]) => (
                      <BodyRow key={name}>
                        <Cell>{name}</Cell>
                        <Cell><BarCell><DataBar style={{ width: Math.round((q / 5974) * 58) }} /><BarText>{q}</BarText></BarCell></Cell>
                        <Cell><SalesCell><StatusGlyph kind={kind} /><SalesText>{amount}</SalesText></SalesCell></Cell>
                      </BodyRow>
                    ))}
                  </tbody>
                  <tfoot>
                    <tr><FootCell $left>Total</FootCell><FootCell>37873</FootCell><FootCell>22,97,200.86</FootCell></tr>
                  </tfoot>
                </DataTable>
              </TableCard>
            </Report>
            <Pane $w={34} $white>
              <PaneButton $below={14} aria-label="Expand filters"><DoubleLeft /></PaneButton>
              <FunnelIcon />
              <PaneTitle $tight>Filters</PaneTitle>
            </Pane>
          </Workspace>
          <PageTabs>
            <ViewButton $w={43} aria-label="Desktop layout">
              <Svg w={20} h={16} stroke={grey} strokeWidth="1.300"><path d="M1 1h18v11H1zM10 12v3M6 15h8" /></Svg>
              <ViewMark />
            </ViewButton>
            <ViewButton $w={46} aria-label="Mobile layout"><Svg w={14} h={21} stroke={grey} strokeWidth="1.300"><path d="M1 1h12v19H1zM6 17h2" /></Svg></ViewButton>
            <ViewButton $w={14} aria-label="Previous page"><Svg w={5} h={8} fill="#c8c6c4"><path d="M5 0v8L0 4z" /></Svg></ViewButton>
            <ViewButton $w={24} aria-label="Next page"><Svg w={5} h={8} fill="#c8c6c4"><path d="M0 0v8l5-4z" /></Svg></ViewButton>
            <PageTab>Shipment Dashboard</PageTab>
            <AddPage aria-label="New page"><Svg w={11} h={11} stroke="#fff" strokeWidth="3"><path d="M5.500 0v11M0 5.500h11" /></Svg></AddPage>
          </PageTabs>
        </Center>
        <Pane $w={35}><PaneButton aria-label="Expand visualizations"><DoubleLeft /></PaneButton><PaneTitle>Visualizations</PaneTitle></Pane>
        <Pane $w={34}><PaneButton aria-label="Expand data"><DoubleLeft /></PaneButton><PaneTitle>Data</PaneTitle></Pane>
      </Body>
      <PaneTooltip role="tooltip">Expand</PaneTooltip>

      <StatusBar>
        <span>Page 1 of 1</span>
        <ZoomGroup>
          <ZoomButton aria-label="Zoom out">-</ZoomButton>
          <ZoomSlider type="range" aria-label="Zoom" value={zoom} onChange={(e) => setZoom(e.target.value)} />
          <ZoomButton aria-label="Zoom in">+</ZoomButton>
          <ZoomValue>95%</ZoomValue>
          <FitButton aria-label="Fit to page"><Svg w={16} h={13} stroke={grey} strokeWidth="1.200"><path d="M.6.6h14.800v11.800H.6zM3 5V3h2.500M10.500 3H13v2M13 8v2h-2.500M5.500 10H3V8" /></Svg></FitButton>
        </ZoomGroup>
      </StatusBar>

      <Taskbar>
        <StartButton aria-label="Start"><WindowsIcon /></StartButton>
        <TaskSearch>
          <SearchIcon color="#111" />
          <TaskInput placeholder="Type here to search" aria-label="Type here to search" />
          <MusicArt />
        </TaskSearch>
        <TaskApp aria-label="Task view"><TaskViewIcon /></TaskApp>
        <TaskApp $w={51} aria-label="Copilot"><CopilotIcon /></TaskApp>
        <TaskApp aria-label="Edge"><EdgeIcon /></TaskApp>
        <TaskApp aria-label="File Explorer"><FolderIcon /></TaskApp>
        <TaskApp aria-label="Chrome"><ChromeIcon /></TaskApp>
        <TaskApp aria-label="Outlook"><OutlookIcon /></TaskApp>
        <TaskApp $w={46} $active aria-label="Power BI"><PowerBiIcon /></TaskApp>
        <Tray>
          <span>Prince</span>
          <Traffic><TrafficIcon /><span>17 min delay on NH4...</span></Traffic>
          <TrayIcons>
            <Svg w={13} h={8} stroke="#111" strokeWidth="1.300"><path d="M.6 7.300 6.500 1.200l5.900 6.100" /></Svg>
            <WifiIcon /><CloudIcon /><CameraIcon /><SoundIcon />
            <span>ENG</span>
          </TrayIcons>
          <Clock>08:06<br />25-03-2025</Clock>
          <NotifyIcon />
        </Tray>
      </Taskbar>
    </Shell>
  );
}
